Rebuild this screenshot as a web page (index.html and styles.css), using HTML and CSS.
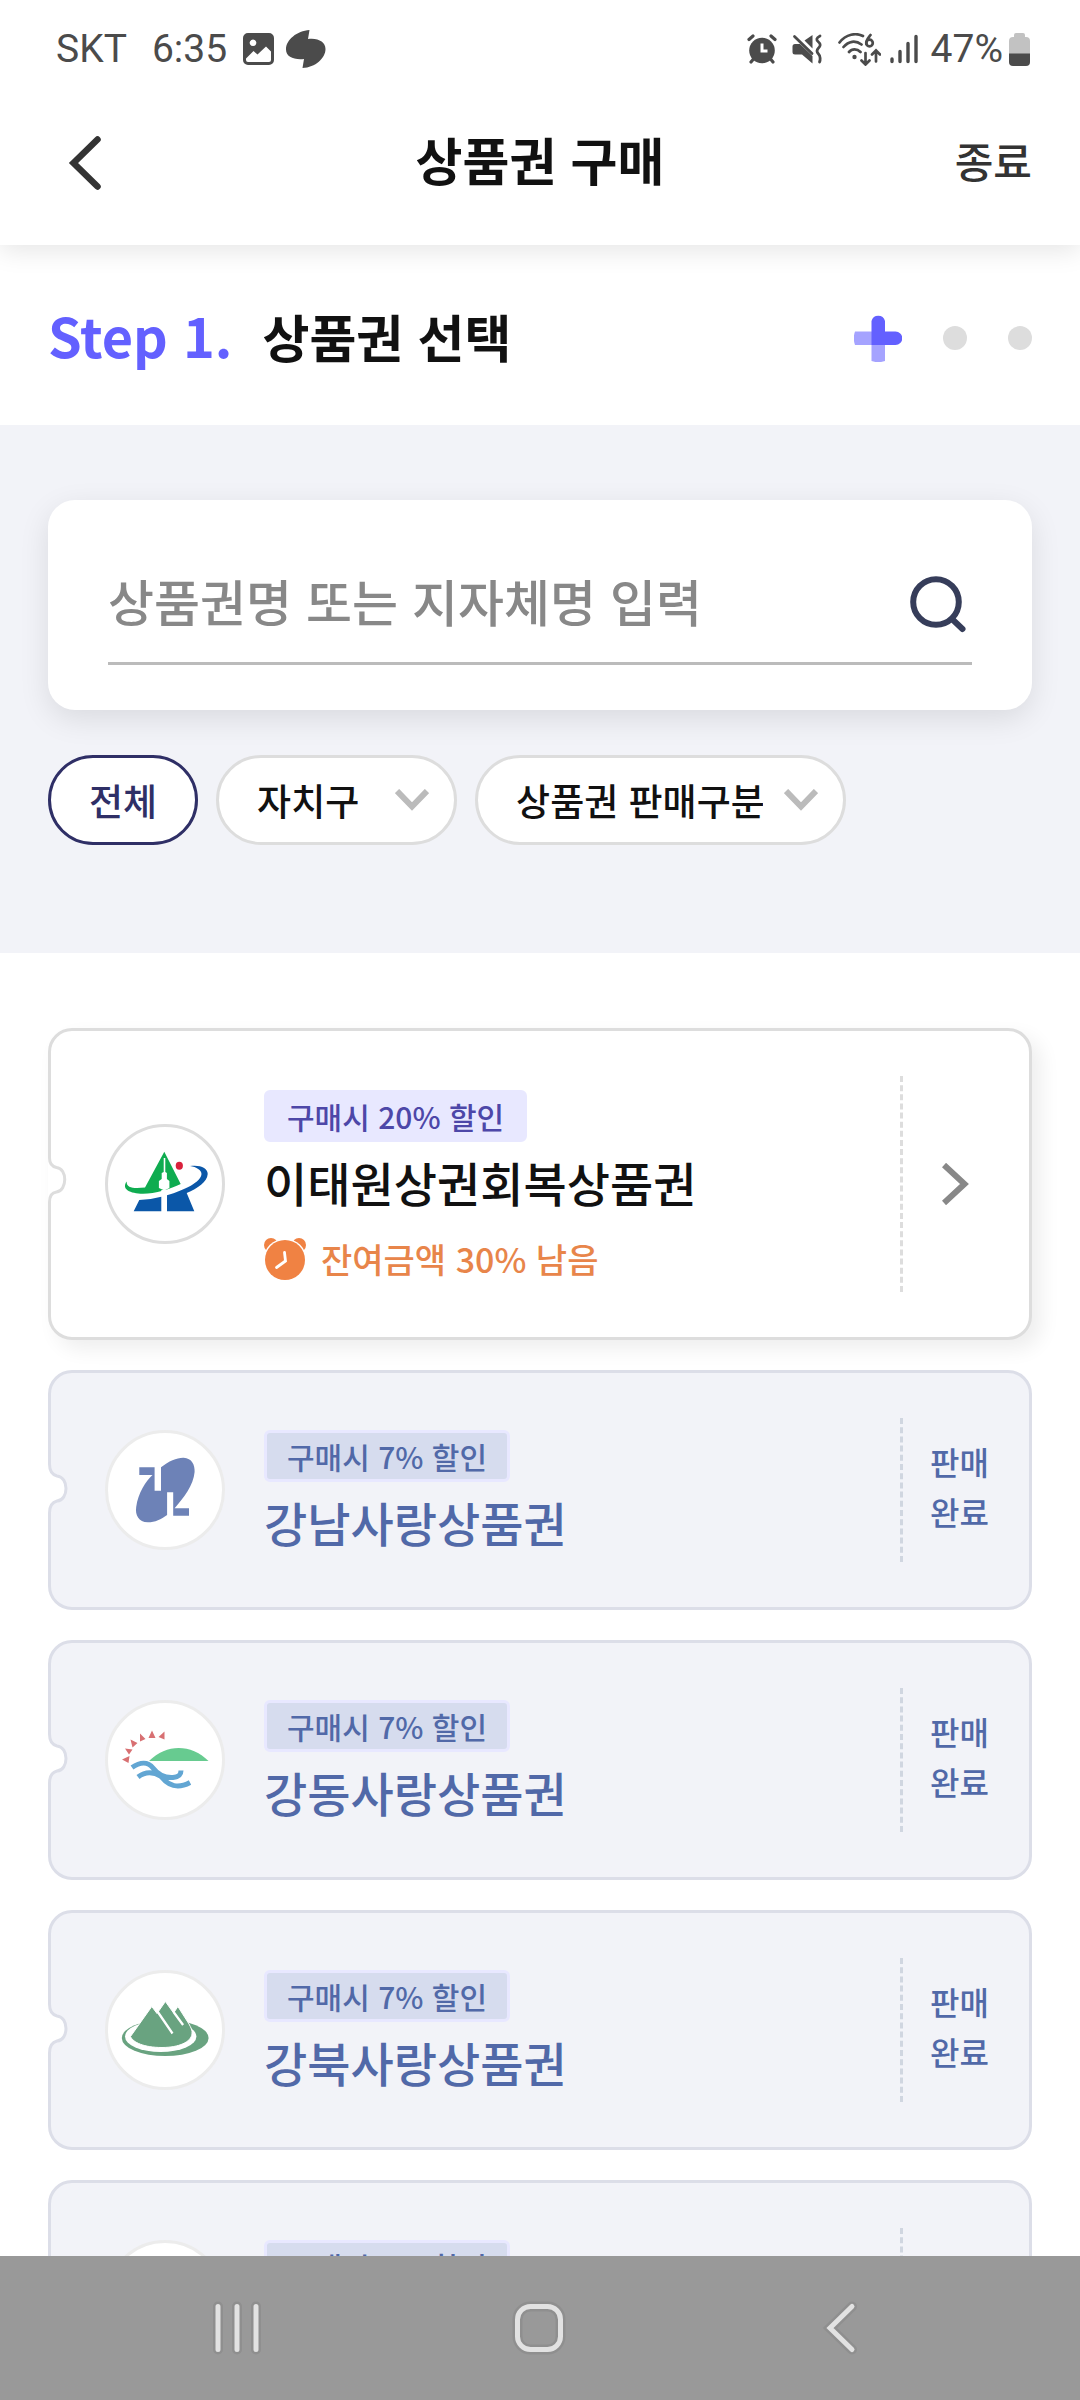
FILE: index.html
```html
<!DOCTYPE html>
<html lang="ko">
<head>
<meta charset="utf-8">
<meta name="viewport" content="width=device-width, initial-scale=1">
<title>상품권 구매</title>
<link rel="stylesheet" href="styles.css">
</head>
<body>
<div class="app">
  <div class="status">
    <div class="status-side">
      <span class="carrier">SKT</span>
      <span class="clock">6:35</span>
      <svg class="status-picture" width="31" height="32" viewBox="0 0 31 32"><path fill="#4b4b4b" fill-rule="evenodd" d="M5 0h21a5 5 0 0 1 5 5v22a5 5 0 0 1-5 5H5a5 5 0 0 1-5-5V5a5 5 0 0 1 5-5zM10 6.500a3.300 3.300 0 1 0 .01 0zM3 25.500v1.500a2 2 0 0 0 2 2h21a2 2 0 0 0 2-2v-8.500l-5-5-8.500 8-4-3.500z"/></svg>
      <svg width="40" height="38" viewBox="0 0 40 38"><path fill="#4b4b4b" d="M23.500 0l-1.500 9c10-1.500 17.500 3 17.500 10 0 9-10 18.500-23 19l1.500-9C8 30 0 27 0 19.500 0 9.500 11 1 23.500 0z"/></svg>
    </div>
    <div class="status-side">
      <svg class="status-alarm" width="30" height="30" viewBox="0 0 30 30"><circle cx="15" cy="16.500" r="12.800" fill="#4b4b4b"/><g fill="none" stroke="#4b4b4b" stroke-width="3.200" stroke-linecap="round"><path d="M2 5.500l4-3.500M28 5.500l-4-3.500M4 28l2.500-3M26 28l-2.500-3"/></g><path d="M15 9.500V17h5.500" fill="none" stroke="#fff" stroke-width="3"/></svg>
      <svg class="status-mute" width="30" height="30" viewBox="0 0 30 30"><g fill="#4b4b4b"><path d="M3 10h5L20.500 22v7.500L10 20.500H3a2.500 2.500 0 0 1-2.500-2.500v-5.500A2.500 2.500 0 0 1 3 10zM12.500 6.500L20.500 1v13.500z"/></g><path d="M2.500 2.500L20 19.500M28 2c-4 2-4 4-1.500 6s2 4 0 6-2 4 0 6 2 6 1 8" fill="none" stroke="#4b4b4b" stroke-width="2.800" stroke-linecap="round"/></svg>
      <svg class="status-wifi" width="43" height="33" viewBox="0 0 43 33"><g fill="none" stroke="#4b4b4b" stroke-width="2.700" stroke-linecap="round"><path d="M1.500 9.500C8 1 18-.5 25 3M5.500 14c5-6 12-7 18-2.500M11 19c3-3.500 8-3.500 11.500 0M32.500 2c-3 4-5 6-4 9M28 26"/><circle cx="31.500" cy="10" r="3.300"/><path d="M27.500 20v11M23.500 27.500l4 4 4-4M38 28.500V18M34 21.500l4-4 4 4"/></g><circle cx="16.500" cy="24" r="2.200" fill="#4b4b4b"/></svg>
      <svg class="status-signal" width="28" height="30" viewBox="0 0 28 30"><g stroke="#4b4b4b" stroke-width="3.400" stroke-linecap="round"><path d="M2 25v2.500M10 17.500v10M18 9.500v18M26 2.500v25"/></g></svg>
      <span class="charge">47%</span>
      <svg width="21" height="33" viewBox="0 0 21 33"><path fill="#c2c2c2" d="M7 0h7a2 2 0 0 1 2 2v2h1a4 4 0 0 1 4 4v13H0V8a4 4 0 0 1 4-4h1V2a2 2 0 0 1 2-2z"/><path fill="#4b4b4b" d="M0 20.500h21V29a4 4 0 0 1-4 4H4a4 4 0 0 1-4-4z"/></svg>
    </div>
  </div>

  <header class="topbar">
    <button class="back" type="button" aria-label="뒤로"><svg width="36" height="56" viewBox="0 0 36 56"><path d="M31.500 4.500L7.500 28l24 23.500" fill="none" stroke="#333" stroke-width="6.500" stroke-linecap="round"/></svg></button>
    <h1 class="topbar-title">상품권 구매</h1>
    <button class="exit" type="button">종료</button>
  </header>

  <section class="step">
    <h2 class="step-title"><span class="step-number">Step 1.</span>상품권 선택</h2>
    <div class="step-marks">
      <svg width="48" height="48" viewBox="0 0 48 48"><path fill="#a5a3ff" d="M1 17.500h17v13.500H1a20 20 0 0 1 0-13.500zM17.500 30.500H31V47a20 20 0 0 1-13.500 0z"/><path fill="#6360ff" d="M17.500 7a7 7 0 0 1 13.500 0v10.500h10.500a6.700 6.700 0 0 1 0 13.500H17.500z"/></svg>
      <span class="dot"></span>
      <span class="dot"></span>
    </div>
  </section>

  <section class="finder">
    <form class="search">
      <div class="search-line">
        <input class="search-input" type="text" aria-label="검색어" placeholder="상품권명 또는 지자체명 입력">
        <button class="search-button" type="button" aria-label="검색"><svg width="56" height="60" viewBox="0 0 56 60"><g fill="none" stroke="#363d5a" stroke-width="6"><circle cx="26" cy="28" r="22.800"/><path d="M42 45l10.500 10" stroke-linecap="round"/></g></svg></button>
      </div>
    </form>
    <div class="chips">
      <button class="chip chip-on" type="button">전체</button>
      <label class="chip-drop"><select class="chip chip-district" aria-label="자치구"><option>자치구</option></select><svg class="chip-arrow" width="34" height="22" viewBox="0 0 34 22"><path d="M2 2l15 15.500L32 2" fill="none" stroke="#bbb" stroke-width="6"/></svg></label>
      <label class="chip-drop"><select class="chip chip-sale" aria-label="상품권 판매구분"><option>상품권 판매구분</option></select><svg class="chip-arrow" width="34" height="22" viewBox="0 0 34 22"><path d="M2 2l15 15.500L32 2" fill="none" stroke="#bbb" stroke-width="6"/></svg></label>
    </div>
  </section>

  <main class="list">
    <a class="card card-open" href="#itaewon">
      <svg class="notch" width="22" height="60" viewBox="0 0 22 60"><path fill="#fff" d="M0 8h1.500q0 10 7 11.500c11 1 11 20 0 21.500q-7 1-7 11H0z"/><path fill="none" stroke="#ddd" stroke-width="3" d="M1.500 8q0 8 7 9.500c11 1 11 23 0 24.500q-7 1-7 10"/></svg>
      <span class="emblem"><svg viewBox="0 0 120 120"><path fill="#0fac50" d="M59.300 27.700L75.700 60C66 65 50 69.700 38 69.700 25 69.700 16 65 21.700 57.500c-.5 7 8 7 18.300 6z"/><path fill="#fff" d="M58.700 34h1.600v14l1.600 1v6l2.500 2v7l-4 2h-2l-4.500-2v-7l2.800-2v-6l2-1z"/><path fill="#fff" d="M56.300 66h5.700v24h-5.700z"/><path fill="#0b57a8" d="M34.300 76q12-.5 22-3.300v14.600H28.700zM62 71.300C80 66 96 58 96.500 50c0-4-5-7-11.500-8 10-1.500 18 2 17.700 8-.5 8-10 14.500-21 19l7.600 18.300H62z"/><ellipse cx="74.300" cy="41.700" rx="3.600" ry="4" fill="#d9213c"/></svg></span>
      <span class="info">
        <span class="badge">구매시 20% 할인</span>
        <strong class="name">이태원상권회복상품권</strong>
        <span class="left"><svg width="42" height="42" viewBox="0 0 42 42"><g fill="#f08243"><circle cx="7" cy="7" r="7"/><circle cx="35" cy="7" r="7"/></g><circle cx="21" cy="22" r="21.500" fill="#fff"/><circle cx="21" cy="22" r="20" fill="#f08243"/><path d="M20.500 14.500l1 8.500-9 6.500" fill="none" stroke="#fff" stroke-width="2.800" stroke-linecap="round"/></svg>잔여금액 30% 남음</span>
      </span>
      <span class="side"><svg width="27" height="42" viewBox="0 0 27 42"><path d="M2 2l20.500 19L2 40" fill="none" stroke="#888" stroke-width="6"/></svg></span>
    </a>

    <article class="card card-sold">
      <svg class="notch" width="22" height="60" viewBox="0 0 22 60"><path fill="#fff" d="M0 5h1.500q0 11 7.500 12.500c12 1 12 23 0 24q-7.500 1.500-7.500 12.500H0z"/><path fill="none" stroke="#dcdee8" stroke-width="3" d="M1.500 5q0 10 7.500 12c12 1 12 24 0 25q-7.500 2-7.500 12"/></svg>
      <span class="emblem"><svg viewBox="0 0 120 120"><path fill="#6d82b7" d="M34.300 37.300h15.300v23.400H56V37.300C64 31 72 27.500 78.600 27.700 87 28 90 35 89.600 42c-1 13-11 26-20 36.300H84v7.400H68.200V62.300h-6.100V85c-6 4.500-12 7.300-19.200 7.300C33.500 92 30 85 31.200 77 33 63 41 51 47.500 45H34.300z"/></svg></span>
      <div class="info">
        <span class="badge">구매시 7% 할인</span>
        <strong class="name">강남사랑상품권</strong>
      </div>
      <span class="side">판매<br>완료</span>
    </article>

    <article class="card card-sold">
      <svg class="notch" width="22" height="60" viewBox="0 0 22 60"><path fill="#fff" d="M0 5h1.500q0 11 7.500 12.500c12 1 12 23 0 24q-7.500 1.500-7.500 12.500H0z"/><path fill="none" stroke="#dcdee8" stroke-width="3" d="M1.500 5q0 10 7.500 12c12 1 12 24 0 25q-7.500 2-7.500 12"/></svg>
      <span class="emblem"><svg viewBox="0 0 120 120"><path fill="#d87072" d="M17 59.500l7.500-3.500-1 7zM20 48.500l7.500 1-3.500 5zM25.500 39.500l7 3.500-5 4.500zM35 33.500l5.500 5.500-5.500 2.500zM47 30.500l3.500 7.500h-7zM59.500 31.500v8l-6-2.500z"/><path fill="#67cb90" d="M44 61C62 43.500 86 44 103.500 61z"/><path fill="none" stroke="#62a6d3" stroke-width="5" d="M27 67.500c8-5.500 16-6 21 .5s12 10 20 9.500c5-.5 8-2 8-7M33 77c8-6 15-5.500 23-.5 8 10 17 12.500 29 6"/></svg></span>
      <div class="info">
        <span class="badge">구매시 7% 할인</span>
        <strong class="name">강동사랑상품권</strong>
      </div>
      <span class="side">판매<br>완료</span>
    </article>

    <article class="card card-sold">
      <svg class="notch" width="22" height="60" viewBox="0 0 22 60"><path fill="#fff" d="M0 5h1.500q0 11 7.500 12.500c12 1 12 23 0 24q-7.500 1.500-7.500 12.500H0z"/><path fill="none" stroke="#dcdee8" stroke-width="3" d="M1.500 5q0 10 7.500 12c12 1 12 24 0 25q-7.500 2-7.500 12"/></svg>
      <span class="emblem"><svg viewBox="0 0 120 120"><ellipse cx="60.200" cy="68" rx="43.400" ry="18" fill="#69a380"/><ellipse cx="55.700" cy="66.500" rx="35.700" ry="15.500" fill="#fff"/><path fill="#69a380" stroke="#fff" stroke-width="1" d="M46.800 36.500l5.200 7 8.400-12 8.200 11.500 4.300-6.500L84 54c2 4 3.500 6 3 10-1 8-13 13.500-30 13.500-18 0-29-5-31.500-11z"/><path stroke="#fff" stroke-width="2.300" d="M52.500 41.500l15 22M68.600 42l9.500 13"/></svg></span>
      <div class="info">
        <span class="badge">구매시 7% 할인</span>
        <strong class="name">강북사랑상품권</strong>
      </div>
      <span class="side">판매<br>완료</span>
    </article>

    <article class="card card-sold">
      <span class="emblem"></span>
      <div class="info">
        <span class="badge">구매시 7% 할인</span>
        <strong class="name">강서사랑상품권</strong>
      </div>
      <span class="side">판매<br>완료</span>
    </article>
  </main>

  <nav class="system">
    <button class="system-button" type="button" aria-label="최근 앱"><svg width="56" height="56" viewBox="0 0 56 56"><g fill="none" stroke-linecap="round"><path class="halo" d="M9 6.500v43M28 6.500v43M47 6.500v43"/><path class="line" d="M9 6.500v43M28 6.500v43M47 6.500v43"/></g></svg></button>
    <button class="system-button" type="button" aria-label="홈"><svg width="56" height="56" viewBox="0 0 56 56"><g fill="none"><rect class="halo" x="6.500" y="6.500" width="43" height="43" rx="13"/><rect class="line" x="6.500" y="6.500" width="43" height="43" rx="13"/></g></svg></button>
    <button class="system-button" type="button" aria-label="이전"><svg width="56" height="56" viewBox="0 0 56 56"><g fill="none" stroke-linecap="round"><path class="halo" d="M39 6.500L17 28l22 21.500"/><path class="line" d="M39 6.500L17 28l22 21.500"/></g></svg></button>
  </nav>
</div>
</body>
</html>
```

FILE: styles.css
```css
* { box-sizing: border-box; }

body {
  margin: 0;
  background: #fff;
  color: #111;
  font-family: "Noto Sans CJK KR", "Noto Sans", sans-serif;
  font-weight: 500;
}

button, input, select {
  margin: 0;
  padding: 0;
  border: 0;
  background: none;
  color: inherit;
  font: inherit;
}

svg { display: block; flex: none; }

.app {
  display: flex;
  flex-direction: column;
  height: 100vh;
}

/* status bar */
.status {
  display: flex;
  flex: none;
  justify-content: space-between;
  height: 98px;
  padding: 0 50px 0 56px;
  color: #4b4b4b;
  font: 400 39px/48px Roboto, sans-serif;
}
.status-side { display: flex; align-items: center; }
.clock { margin-left: 25px; }
.status-picture { margin: 0 12px 0 16px; }
.status-alarm { margin-right: 15px; }
.status-mute { margin-right: 16px; }
.status-wifi { margin-right: 9px; }
.status-signal { margin-right: 13px; }
.charge { margin-right: 6px; }

/* title bar */
.topbar {
  position: relative;
  z-index: 1;
  display: grid;
  flex: none;
  grid-template-columns: 1fr auto 1fr;
  align-items: center;
  height: 147px;
  padding: 0 48px 18px;
  background: #fff;
  box-shadow: 0 6px 24px rgba(0, 0, 0, .1);
  clip-path: inset(0 0 -40px 0);
}
.back { justify-self: start; margin-left: 18px; }
.topbar-title { margin: 0; padding-bottom: 8px; font-size: 51px; line-height: 78px; font-weight: 700; }
.exit { justify-self: end; padding-bottom: 6px; color: #333; font-size: 42px; line-height: 60px; }

/* step heading */
.step {
  display: flex;
  flex: none;
  align-items: center;
  justify-content: space-between;
  height: 180px;
  padding: 0 48px;
}
.step-title { display: flex; align-items: baseline; gap: 30px; margin: 0; font-size: 51px; line-height: 78px; font-weight: 700; }
.step-number { color: #6360ff; font-size: 54px; }
.step-marks { display: flex; align-items: center; gap: 41px; padding-top: 6px; }
.dot { width: 24px; height: 24px; border-radius: 50%; background: #ddd; }

/* search and filters */
.finder {
  flex: none;
  padding: 75px 48px 108px;
  background: #f2f3f8;
}
.search {
  padding: 45px 60px;
  border-radius: 27px;
  background: #fff;
  box-shadow: 0 9px 30px rgba(0, 0, 0, .1);
}
.search-line {
  display: flex;
  align-items: center;
  height: 120px;
  padding-right: 6px;
  border-bottom: 3px solid #bbb;
}
.search-input { flex: 1; min-width: 0; height: 90px; padding-bottom: 8px; font-size: 50px; outline: 0; }
.search-input::placeholder { color: #888; opacity: 1; }
.chips { display: flex; gap: 18px; margin-top: 45px; }
.chip {
  height: 90px;
  padding: 0 38px;
  border: 3px solid #ddd;
  border-radius: 45px;
  background: #fff;
  color: #111;
  font-size: 37px;
  line-height: 60px;
  appearance: none;
}
.chip-on { border-color: #2f2f66; color: #2f2f66; }
.chip-drop { display: grid; align-items: center; }
.chip-drop > * { grid-area: 1 / 1; }
.chip-district { padding-right: 94px; }
.chip-sale { padding-right: 80px; }
.chip-arrow { justify-self: end; margin-right: 28px; pointer-events: none; }

/* voucher list */
.list {
  display: flex;
  flex: 1;
  flex-direction: column;
  gap: 30px;
  min-height: 0;
  padding: 75px 48px 0;
  overflow: hidden;
}
.card {
  position: relative;
  display: flex;
  flex: none;
  align-items: center;
  padding: 45px 0 45px 54px;
  border: 3px solid #dcdee8;
  border-radius: 24px;
  background: #f2f3f8;
  color: #5169a8;
  text-decoration: none;
}
.card-open {
  border-color: #ddd;
  background: #fff;
  color: #111;
  box-shadow: 9px 9px 20px rgba(0, 0, 0, .07);
}
.notch { position: absolute; left: -3px; top: 50%; margin-top: -31px; }
.card-open .notch { margin-top: -34px; }
.emblem {
  flex: none;
  width: 120px;
  height: 120px;
  border: 3px solid #ececec;
  border-radius: 50%;
  background: #fff;
}
.emblem svg { margin: -3px; }
.card-open .emblem { border-color: #ddd; }
.info {
  display: flex;
  flex: 1;
  flex-direction: column;
  align-items: flex-start;
  margin-left: 39px;
  padding-top: 8px;
}
.badge {
  padding: 0 20px;
  border: 3px solid #e8e8ff;
  border-radius: 6px;
  background: #d6dcee;
  font-size: 30px;
  line-height: 46px;
}
.card-open .badge { background: #e8e8ff; color: #4d47a8; }
.name { margin-top: 4px; font-size: 47px; font-weight: 500; line-height: 72px; }
.left {
  display: flex;
  align-items: center;
  gap: 15px;
  margin-top: 14px;
  color: #e8854a;
  font-size: 34px;
  line-height: 54px;
}
.side {
  display: flex;
  flex: none;
  align-items: center;
  width: 129px;
  min-height: 144px;
  padding: 0 0 8px 27px;
  border-left: 3px dashed #d0d6e0;
  font-size: 32px;
  line-height: 50px;
}
.card-open .side {
  min-height: 216px;
  padding: 0 0 0 39px;
  border-color: #ddd;
}

/* system navigation */
.system {
  display: flex;
  flex: none;
  align-items: center;
  justify-content: center;
  gap: 246px;
  height: 144px;
  padding-right: 3px;
  background: #999;
}
.system-button { display: block; }
.halo { stroke: #8f8f8f; stroke-width: 10px; }
.line { stroke: #e2e2e2; stroke-width: 5px; }
```
